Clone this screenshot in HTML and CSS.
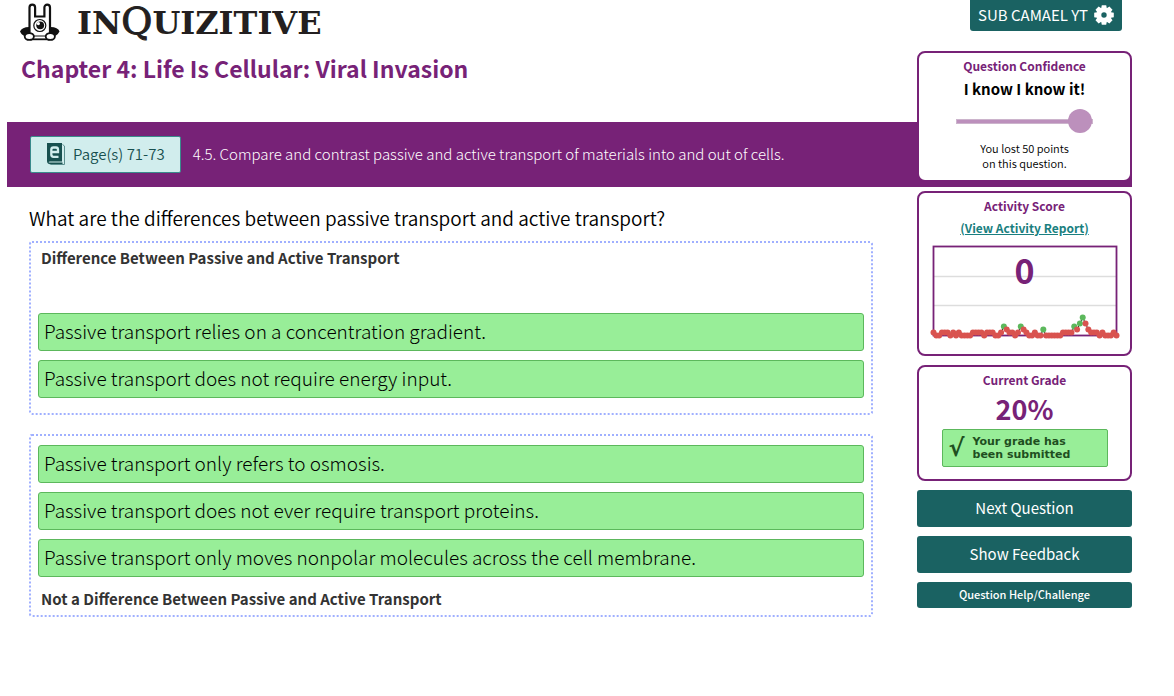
FILE: index.html
```
<!DOCTYPE html>
<html lang="en">
<head>
<meta charset="utf-8">
<meta name="viewport" content="width=device-width, initial-scale=1">
<title>InQuizitive</title>
<link rel="stylesheet" href="styles.css">
</head>
<body>
<div class="page">
  <header class="header">
    <div class="brand">
      <svg class="brand-icon" viewBox="0 0 40 38" aria-hidden="true">
        <path d="M-1 28.500Q1 24 8 24H29.500Q37 24 38.500 28.500Q36 34 28 34H10Q1 34-1 28.500z" fill="#111"/>
        <path d="M8.500 32V4.500a2.800 2.800 0 0 1 5.600 0V13.500h9.300V4.500a2.800 2.800 0 0 1 5.600 0V32z" fill="#fff" stroke="#111" stroke-width="2.200"/>
        <path d="M9 36.300h20" stroke="#111" stroke-width="1.800"/>
        <path d="M9.600 30h18.300v4.500H9.600z" fill="#fff"/>
        <path d="M12 33h14" stroke="#111" stroke-width="1"/>
        <ellipse cx="8.300" cy="33.500" rx="4.600" ry="3.400" fill="#fff" stroke="#111" stroke-width="1.800"/>
        <ellipse cx="29.300" cy="33.500" rx="4.600" ry="3.400" fill="#fff" stroke="#111" stroke-width="1.800"/>
        <circle cx="18.800" cy="22.500" r="6" fill="#fff" stroke="#111" stroke-width="1.200"/>
        <circle cx="19.200" cy="22.300" r="3.900" fill="#111"/>
        <circle cx="17.400" cy="20.600" r="1.600" fill="#fff"/>
      </svg>
      <span class="brand-name">IN<span class="brand-q">Q</span>UIZITIVE</span>
    </div>
    <h1 class="chapter">Chapter 4: Life Is Cellular: Viral Invasion</h1>
  </header>

  <div class="objective">
    <button class="pages" type="button">
      <svg class="pages-icon" viewBox="0 0 18 22" aria-hidden="true">
        <path d="M15.500 1.500L17.500 3v18.500H3.500L1 19.500" fill="#d1eded" stroke="#5b8f8f" stroke-width="1"/>
        <path d="M0 0h15v18.500H3q-1.500 0-1.500 1h14V21H3Q0 21 0 18z" fill="#17504f"/>
        <path d="M4.500 9H11V6.800Q11 4.500 9 4.500H6.500Q4.300 4.500 4.300 6.800V11.500Q4.300 13.800 6.500 13.800H11.500" fill="none" stroke="#d1eded" stroke-width="2.300"/>
      </svg>
      <span>Page(s) 71-73</span>
    </button>
    <p class="objective-text">4.5. Compare and contrast passive and active transport of materials into and out of cells.</p>
  </div>

  <main class="question">
    <h2 class="prompt">What are the differences between passive transport and active transport?</h2>
    <section class="zone zone-top">
      <h3 class="zone-label">Difference Between Passive and Active Transport</h3>
      <ul class="answers">
        <li class="answer">Passive transport relies on a concentration gradient.</li>
        <li class="answer">Passive transport does not require energy input.</li>
      </ul>
    </section>
    <section class="zone zone-bottom">
      <ul class="answers">
        <li class="answer">Passive transport only refers to osmosis.</li>
        <li class="answer">Passive transport does not ever require transport proteins.</li>
        <li class="answer">Passive transport only moves nonpolar molecules across the cell membrane.</li>
      </ul>
      <h3 class="zone-label">Not a Difference Between Passive and Active Transport</h3>
    </section>
  </main>

  <aside class="sidebar">
    <button class="user" type="button">
      <span>SUB CAMAEL YT</span>
      <svg class="gear" viewBox="-10 -10 20 20" aria-hidden="true">
        <g fill="#fff">
          <path d="M-2.200-9.800h4.400l.8 4h-6z"/>
          <path d="M-2.200-9.800h4.400l.8 4h-6z" transform="rotate(45)"/>
          <path d="M-2.200-9.800h4.400l.8 4h-6z" transform="rotate(90)"/>
          <path d="M-2.200-9.800h4.400l.8 4h-6z" transform="rotate(135)"/>
          <path d="M-2.200-9.800h4.400l.8 4h-6z" transform="rotate(180)"/>
          <path d="M-2.200-9.800h4.400l.8 4h-6z" transform="rotate(225)"/>
          <path d="M-2.200-9.800h4.400l.8 4h-6z" transform="rotate(270)"/>
          <path d="M-2.200-9.800h4.400l.8 4h-6z" transform="rotate(315)"/>
        </g>
        <circle r="5" fill="none" stroke="#fff" stroke-width="4.600"/>
      </svg>
    </button>

    <section class="card confidence">
      <label class="card-title" for="confidence">Question Confidence</label>
      <p class="confidence-value">I know I know it!</p>
      <input class="slider" id="confidence" type="range" min="0" max="100" value="100" disabled>
      <p class="note">You lost 50 points<br>on this question.</p>
    </section>

    <section class="card activity">
      <h2 class="card-title">Activity Score</h2>
      <a class="report" href="#">(View Activity Report)</a>
      <svg class="chart" id="chart" viewBox="0 0 191 95" role="img" aria-label="Activity score history">
        <path d="M5 31.500h182M5 60.500h182" stroke="#ddd" stroke-width="1.500"/>
        <rect x="4.500" y="1.500" width="183" height="89" fill="none" stroke="#772277" stroke-width="1.800"/>
        <text class="score" x="95.500" y="39" text-anchor="middle">0</text>
      </svg>
    </section>

    <section class="card grade">
      <h2 class="card-title">Current Grade</h2>
      <p class="grade-value">20%</p>
      <div class="submitted">
        <span class="tick">√</span>
        <span>Your grade has<br>been submitted</span>
      </div>
    </section>

    <button class="action" type="button">Next Question</button>
    <button class="action" type="button">Show Feedback</button>
    <button class="action action-small" type="button">Question Help/Challenge</button>
  </aside>
</div>
<script src="chart.js"></script>
</body>
</html>
```
FILE: styles.css
```
* {
  box-sizing: border-box;
  margin: 0;
  padding: 0;
}

body {
  background: #fff;
  color: #000;
  font-family: "Noto Sans CJK SC", "Noto Sans", sans-serif;
  font-size: 16px;
  line-height: 20px;
}

button {
  border: 0;
  color: inherit;
  font: inherit;
  cursor: pointer;
}

.page {
  display: grid;
  grid-template-columns: minmax(0, 1fr) 215px;
  grid-template-rows: auto auto 1fr;
  padding: 0 42px 0 7px;
}

.header {
  grid-area: 1 / 1;
  padding: 2px 14px 38px;
}

.brand {
  display: flex;
  align-items: center;
  gap: 16px;
  height: 40px;
}

.brand-icon {
  width: 40px;
  height: 38px;
  overflow: visible;
}

.brand-name {
  color: #231f20;
  font-family: "DejaVu Serif", serif;
  font-size: 32px;
  font-weight: bold;
  line-height: 38px;
}

.brand-q {
  font-size: 38px;
  font-weight: normal;
  line-height: 38px;
  -webkit-text-stroke: 1px #231f20;
}

.chapter {
  margin-top: 10px;
  color: #772277;
  font-size: 23px;
  line-height: 32px;
}

.objective {
  grid-area: 2 / 1 / 3 / 3;
  display: flex;
  align-items: center;
  gap: 12px;
  padding: 14px 238px 14px 23px;
  background: #772277;
  color: #fff;
  font-size: 15px;
  font-weight: 300;
}

.objective-text {
  padding-bottom: 2px;
}

.pages {
  display: flex;
  align-items: center;
  gap: 8px;
  flex: none;
  height: 37px;
  padding: 0 15px 2px 16px;
  border: 1px solid #3a8a8c;
  border-radius: 2px;
  background: #d1eded;
  color: #17504f;
  font-size: 15px;
  font-weight: 350;
}

.pages-icon {
  width: 18px;
  height: 22px;
}

.question {
  grid-area: 3 / 1;
  padding: 19px 44px 0 22px;
}

.prompt {
  margin-bottom: 11px;
  font-size: 19px;
  font-weight: 350;
  line-height: 24px;
}

.zone {
  margin-bottom: 19px;
  padding: 5px 7px 7px;
  border: 2px dotted #a0b0ff;
  border-radius: 3px;
}

.zone-label {
  padding: 0 3px;
  color: #333;
  font-size: 15px;
}

.zone-top .answers {
  padding: 45px 0 8px;
}

.zone-bottom .answers {
  padding: 4px 0 12px;
}

.zone-bottom {
  padding-bottom: 6px;
}

.answers {
  display: grid;
  gap: 9px;
  list-style: none;
}

.answer {
  padding: 4px 5px 6px;
  border: 1px solid #5cb85c;
  border-radius: 3px;
  background: #98ee98;
  font-size: 19px;
  font-weight: 300;
  line-height: 26px;
}

.sidebar {
  grid-area: 1 / 2 / 4 / 3;
  display: flex;
  flex-direction: column;
  gap: 9px;
  z-index: 1;
}

.user {
  display: flex;
  align-items: center;
  align-self: flex-end;
  gap: 6px;
  height: 31px;
  margin: 0 10px 11px 0;
  padding: 0 8px 2px;
  border-radius: 0 0 3px 3px;
  background: #1a6262;
  color: #fff;
  font-size: 15px;
}

.gear {
  width: 20px;
  height: 20px;
}

.card {
  display: flex;
  flex-direction: column;
  align-items: center;
  padding: 3px 10px;
  border: 2px solid #772277;
  border-radius: 8px;
  background: #fff;
  text-align: center;
}

.card-title {
  color: #772277;
  font-size: 12px;
  font-weight: 700;
}

.confidence {
  min-height: 131px;
}

.confidence-value {
  margin-top: 3px;
  font-size: 15px;
  font-weight: 700;
}

.slider {
  appearance: none;
  width: 137px;
  height: 24px;
  margin-top: 10px;
  background: transparent;
}

.slider::-webkit-slider-runnable-track {
  height: 5px;
  border: 1px solid #ccb4cc;
  background: #bc90bc;
}

.slider::-webkit-slider-thumb {
  appearance: none;
  width: 24px;
  height: 24px;
  margin-top: -11px;
  border: 0;
  border-radius: 50%;
  background: #bc90bc;
}

.note {
  margin-top: 8px;
  font-size: 11px;
  font-weight: 350;
  line-height: 15px;
}

.activity {
  min-height: 165px;
}

.report {
  margin-top: 2px;
  color: #1a7f80;
  font-size: 12px;
  font-weight: 700;
}

.chart {
  width: 191px;
  height: 95px;
  margin-top: 7px;
}

.score {
  fill: #772277;
  font-size: 34px;
  font-weight: 700;
}

.grade {
  min-height: 116px;
}

.grade-value {
  color: #772277;
  font-size: 27px;
  font-weight: 700;
  line-height: 38px;
}

.submitted {
  display: flex;
  align-items: center;
  gap: 8px;
  width: 166px;
  height: 38px;
  margin-top: 1px;
  padding: 0 6px;
  border: 1px solid #5cb85c;
  border-radius: 2px;
  background: #98ee98;
  color: #1f4f1f;
  font-family: "DejaVu Sans", sans-serif;
  font-size: 11px;
  font-weight: 700;
  line-height: 13px;
  text-align: left;
}

.tick {
  font-size: 24px;
}

.action {
  padding: 8px 8px 9px;
  border-radius: 3px;
  background: #1a6262;
  color: #fff;
  font-size: 15px;
}

.action-small {
  padding: 2px 2px 4px;
  font-size: 11px;
  font-weight: 500;
}
```
FILE: chart.js
```
const chart = document.getElementById("chart");
const levels = [
  1, 0, 0, 1, 1, 1, 0, 1, 0, 1, 0, 0, 0, 0, 1, 1, 1, 1, 0, 1, 1, 1,
  0, 0, 1, 3, 2, 1, 1, 0, 1, 3, 2, 1, 0, 0, 1, 0, 0, 2, 0, 0, 0, 0,
  0, 0, 1, 1, 1, 1, 3, 2, 4, 6, 4, 2, 1, 1, 1, 0, 1, 0, 0, 0, 1, 0
];
const correct = new Set([25, 31, 39, 50, 52, 53]);
const points = levels.map((level, i) => [4.5 + (i * 183) / 65, 90.5 - level * 3]);

function draw(name, attributes) {
  const node = document.createElementNS("http://www.w3.org/2000/svg", name);
  for (const key in attributes) node.setAttribute(key, attributes[key]);
  chart.append(node);
}

draw("polyline", { points: points.join(" "), fill: "none", stroke: "#222" });
points.forEach(([cx, cy], i) => {
  draw("circle", { cx, cy, r: 3, fill: correct.has(i) ? "#5cb85c" : "#d9534f" });
});
```
